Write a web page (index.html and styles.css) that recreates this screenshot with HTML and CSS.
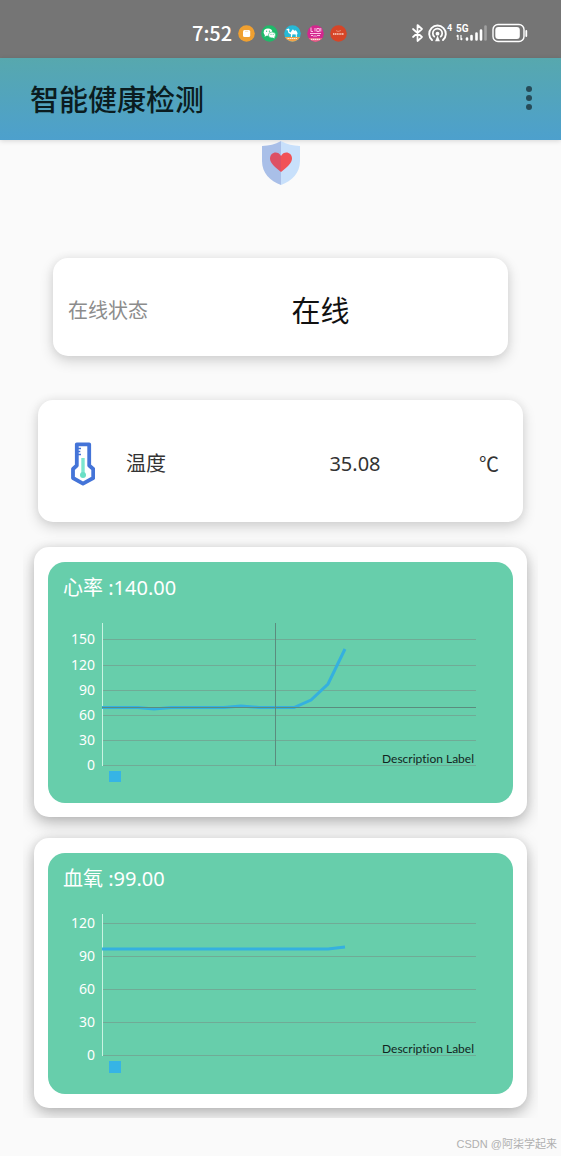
FILE: index.html
```html
<!DOCTYPE html>
<html lang="zh-CN">
<head>
<meta charset="utf-8">
<meta name="viewport" content="width=device-width, initial-scale=1">
<title>智能健康检测</title>
<link rel="stylesheet" href="styles.css">
</head>
<body>
<div class="status-bar">
  <div class="status-left">
    <span class="clock">7:52</span>
    <svg class="app-dot" viewBox="0 0 17 17" aria-hidden="true"><circle cx="8.500" cy="8.500" r="8.300" fill="#f0a030"/><rect x="5" y="5" width="7.200" height="7" rx="1.500" fill="#fff"/><path d="M7 6.300h3.200" stroke="#f3c47e" stroke-width=".6"/></svg>
    <svg class="app-dot" viewBox="0 0 17 17" aria-hidden="true"><circle cx="8.500" cy="8.500" r="8.300" fill="#1fba6a"/><ellipse cx="7" cy="7.200" rx="4.300" ry="3.600" fill="#fff"/><path d="M4 9.500l-.4 2.300 2.400-1.200z" fill="#fff"/><ellipse cx="11" cy="10" rx="3.600" ry="3" fill="#fff" stroke="#1fba6a" stroke-width=".6"/><path d="M11.500 12.500l2 1-.3-2z" fill="#fff"/><g fill="#1fba6a"><circle cx="5.600" cy="6.200" r=".6"/><circle cx="8.400" cy="6.200" r=".6"/><circle cx="10" cy="9.300" r=".5"/><circle cx="12.200" cy="9.300" r=".5"/></g></svg>
    <svg class="app-dot" viewBox="0 0 17 17" aria-hidden="true"><defs><clipPath id="round"><circle cx="8.500" cy="8.500" r="8.300"/></clipPath></defs><g clip-path="url(#round)"><path fill="#26b9d6" d="M0 0h17v17H0z"/><path fill="#f0a24a" d="M0 12h17v5H0z"/><path d="M3.500 13.500h10" stroke="#fff3df" stroke-width="1.200" stroke-dasharray="1.500 .5"/><path d="M2.500 4.300l2.200-.8.8 1-.3 2.200 1.300.8 1.200-1.700 1.200-1.600 1.400 1.500 1.500-.4 1.300 1.800.5 2-.8.300v2.600h-1V9.500l-3.300-.3-.6 2.800H6.900V9.300L4.500 8 3.700 5.200l-1.200.1z" fill="#fff"/></g></svg>
    <svg class="app-dot" viewBox="0 0 17 17" aria-hidden="true"><g clip-path="url(#round)"><path fill="#d4268e" d="M0 0h17v17H0z"/><path fill="#e8698a" d="M0 13h17v4H0z"/><g fill="none" stroke="#ffd5ee" stroke-width=".9"><path d="M4 2.500v4h2M8 3v3.500M9.800 3.500h2.500v3H9.800zM13.800 3v3.500M3 8.500h11M4 10.500h2l1 1 1-1 1 1 1-1h3"/></g><path d="M4 14.300h9" stroke="#fff" stroke-dasharray="1.500 .5"/></g></svg>
    <svg class="app-dot" viewBox="0 0 17 17" aria-hidden="true"><circle cx="8.500" cy="8.500" r="8.300" fill="#d64527"/><path d="M3 9h11" stroke="#fbd9cc" stroke-width="1.600" stroke-dasharray="1.300 .5"/><path d="M6 5.500l2 1 3-1" fill="none" stroke="#eda48f" stroke-width=".7"/></svg>
  </div>
  <svg class="status-icons" viewBox="0 0 120 22" aria-label="蓝牙、热点、5G、电量">
    <g fill="none" stroke="#fff" stroke-linecap="round">
      <path d="M2 7l9 8-4.500 4V3L11 7l-9 8" stroke-width="1.700" stroke-linejoin="round"/>
      <path d="M21 18a8.300 8.300 0 1 1 11 0" stroke-width="1.900"/>
      <path d="M23.300 14.700a4.700 4.700 0 1 1 6.400 0" stroke-width="1.700"/>
    </g>
    <circle cx="26.500" cy="11.700" r="1.900" fill="#fff"/>
    <path d="M26.500 13.500l2.400 5.700h-4.800z" fill="#fff"/>
    <text class="net-small" x="36" y="9">4</text>
    <text class="net" x="45" y="10">5G</text>
    <path d="M47 13v5M45.700 14.500L47 13M50 18v-5M51.300 16.500L50 18" stroke="#fff" stroke-width="1.200" fill="none"/>
    <g stroke="#fff" stroke-width="2.600" stroke-linecap="round"><path d="M56 17.500v-1M60.500 17.500V14M65.500 17.500v-6M70 17.500V8.500"/><path d="M74.500 17.500V4.500" stroke="#a0a0a0"/></g>
    <rect x="82" y="2.500" width="31" height="17" rx="5" fill="none" stroke="#fff" stroke-width="1.400"/>
    <rect x="84.300" y="5" width="24.500" height="12" rx="3" fill="#fff"/>
    <path d="M115.300 9v5" stroke="#fff" stroke-width="1.800" stroke-linecap="round"/>
  </svg>
</div>

<header class="app-bar">
  <h1 class="app-title">智能健康检测</h1>
  <button class="menu-button" type="button" aria-label="更多选项"><span class="dot"></span><span class="dot"></span><span class="dot"></span></button>
</header>

<main class="content">
  <svg class="shield" viewBox="0 0 40 46" aria-hidden="true">
    <path d="M20 1C14 4.500 8 5.500 1 6v15c0 12 8 20 19 24z" fill="#a9bfe8"/>
    <path d="M20 1c6 3.500 12 4.500 19 5v15c0 12-8 20-19 24z" fill="#c8e0fb"/>
    <path d="M20 32C12 26 9 22 9 18.500c0-6.500 8-8.500 11-2.500z" fill="#dd5064"/>
    <path d="M20 32c8-6 11-10 11-13.500 0-6.500-8-8.500-11-2.500z" fill="#f15256"/>
  </svg>

  <section class="card online-card">
    <span class="online-label">在线状态</span>
    <span class="online-value">在线</span>
  </section>

  <section class="card temp-card">
    <svg class="thermometer" viewBox="0 0 24 44" aria-hidden="true">
      <path d="M5.800 2.300h12.400v21.200l4 3.500v9L12 41.700 2 36v-9l3.800-3.500z" fill="#fff" stroke="#4474d8" stroke-width="3.800" stroke-linejoin="round"/>
      <path d="M7 6.500h3M7 9.500h2.300M7 12.500h3" stroke="#4474d8" stroke-width="1.300"/>
      <path d="M12 16v17" stroke="#7ce7cf" stroke-width="3.400"/><circle cx="12" cy="33" r="3" fill="#6adfc5"/>
    </svg>
    <span class="temp-label">温度</span>
    <span class="temp-value">35.08</span>
    <span class="temp-unit">℃</span>
  </section>

  <div class="chart-list">
    <section class="card chart-card">
      <div class="chart-panel">
        <h2 class="chart-title">心率 :140.00</h2>
        <svg class="chart" viewBox="0 0 465 191" role="img" aria-label="心率曲线">
          <path class="grid-line" d="M54 27.500h374M54 53.500h374M54 78.500h374M54 103.500h374M54 128.500h374M54 153.500h374"/>
          <path class="axis-line" d="M54.500 11v143"/>
          <g class="axis-label"><text x="47" y="32">150</text><text x="47" y="58">120</text><text x="47" y="83">90</text><text x="47" y="108">60</text><text x="47" y="133">30</text><text x="47" y="158">0</text></g>
          <polyline class="data-line" points="54,95.500 90,95.500 106,97 123,95.500 176,95.500 193,94 211,95.500 246,95.500 263,88 280,72 297,37"/>
          <path class="cross-line" d="M54 95.500h374M227.500 11v143"/>
          <rect class="legend" x="61" y="159" width="12" height="11"/>
          <text class="description" x="426" y="151">Description Label</text>
        </svg>
      </div>
    </section>

    <section class="card chart-card">
      <div class="chart-panel">
        <h2 class="chart-title">血氧 :99.00</h2>
        <svg class="chart" viewBox="0 0 465 191" role="img" aria-label="血氧曲线">
          <path class="grid-line" d="M54 20.500h374M54 53.500h374M54 86.500h374M54 119.500h374M54 152.500h374"/>
          <path class="axis-line" d="M54.500 11v142"/>
          <g class="axis-label"><text x="47" y="25">120</text><text x="47" y="58">90</text><text x="47" y="91">60</text><text x="47" y="124">30</text><text x="47" y="157">0</text></g>
          <polyline class="data-line" points="54,46 280,46 297,44"/>
          <rect class="legend" x="61" y="158" width="12" height="12"/>
          <text class="description" x="426" y="150">Description Label</text>
        </svg>
      </div>
    </section>
  </div>
</main>

<footer class="watermark">CSDN @阿柒学起来</footer>
</body>
</html>
```
FILE: styles.css
```css
* {
  box-sizing: border-box;
}

body {
  margin: 0;
  background: #fafafa;
  color: #333;
  font-family: "Noto Sans", "Noto Sans CJK SC", sans-serif;
}

.status-bar {
  display: flex;
  align-items: center;
  justify-content: space-between;
  height: 58px;
  padding: 8px 30px 0 192px;
  background: #757575;
  color: #fff;
}

.status-left {
  display: flex;
  align-items: center;
  gap: 6px;
}

.clock {
  font-family: "Noto Sans CJK SC", sans-serif;
  font-size: 20px;
  font-weight: 500;
  line-height: 24px;
}

.app-dot {
  width: 17px;
  height: 17px;
}

.status-icons {
  width: 120px;
  height: 22px;
}

.net,
.net-small {
  fill: #fff;
  font-family: Roboto, sans-serif;
  font-weight: 700;
  font-size: 10px;
}

.net-small {
  font-size: 9px;
}

.app-bar {
  display: flex;
  align-items: center;
  justify-content: space-between;
  height: 82px;
  padding: 0 25px 2px 30px;
  background: linear-gradient(#57a8ae, #4da0cd);
  box-shadow: 0 1px 5px rgba(0, 0, 0, 0.15);
}

.app-title {
  margin: 0;
  color: #0b1c20;
  font-family: "Noto Sans CJK SC", sans-serif;
  font-size: 29px;
  font-weight: 500;
  line-height: 40px;
}

.menu-button {
  display: flex;
  flex-direction: column;
  align-items: center;
  gap: 3px;
  padding: 4px;
  border: 0;
  background: none;
}

.dot {
  width: 6px;
  height: 6px;
  border-radius: 50%;
  background: #274b58;
}

.content {
  display: flex;
  flex-direction: column;
}

.shield {
  align-self: center;
  width: 40px;
  height: 46px;
}

.card {
  border-radius: 15px;
  background: #fff;
  box-shadow: 0 5px 14px rgba(0, 0, 0, 0.16), 0 0 10px rgba(0, 0, 0, 0.06);
}

.online-card {
  display: grid;
  grid-template-columns: 1fr 1fr;
  align-items: center;
  height: 98px;
  margin: 72px 53px 0;
  padding: 4px 15px 0;
  font-family: "Noto Sans CJK SC", sans-serif;
}

.online-label {
  color: #8c8c8c;
  font-size: 20px;
}

.online-value {
  padding-left: 11px;
  color: #111;
  font-size: 29px;
}

.temp-card {
  display: grid;
  grid-template-columns: 24px 3fr 2fr auto;
  align-items: center;
  height: 122px;
  margin: 44px 38px 0;
  padding: 6px 24px 0 33px;
  font-size: 20px;
  line-height: 30px;
}

.thermometer {
  width: 24px;
  height: 44px;
}

.temp-label {
  padding-left: 31px;
}

.temp-value {
  padding-left: 4px;
}

.temp-unit {
  font-family: "Noto Sans CJK SC", sans-serif;
}

.chart-list {
  display: flex;
  flex-direction: column;
  gap: 21px;
  margin: 0 23px;
  padding: 25px 11px 10px;
  overflow: hidden;
}

.chart-card {
  padding: 15px 14px 14px;
  box-shadow: 0 6px 16px rgba(0, 0, 0, 0.26), 0 0 10px rgba(0, 0, 0, 0.08);
}

.chart-panel {
  overflow: hidden;
  border-radius: 17px;
  background: #67ceab;
}

.chart-title {
  margin: 0;
  padding: 11px 15px 9px;
  color: #fff;
  font-size: 20px;
  font-weight: 400;
  line-height: 30px;
}

.chart {
  display: block;
  width: 100%;
}

.grid-line,
.axis-line,
.cross-line {
  fill: none;
  stroke: #70ab96;
}

.axis-line {
  stroke: #c9f3e2;
}

.cross-line {
  stroke: #5b8c7e;
}

.axis-label {
  fill: #fff;
  font-size: 14px;
  text-anchor: end;
}

.data-line {
  fill: none;
  stroke: #35b0df;
  stroke-width: 3;
}

.legend {
  fill: #36b4e5;
}

.description {
  fill: #12251e;
  font-family: Lato, "Noto Sans", sans-serif;
  font-size: 12px;
  font-variant-ligatures: none;
  text-anchor: end;
}

.watermark {
  padding: 18px 4px 0 0;
  color: #b0b0b0;
  font-family: "Liberation Sans", "Noto Sans CJK SC", sans-serif;
  font-size: 11px;
  line-height: 16px;
  text-align: right;
}
```
